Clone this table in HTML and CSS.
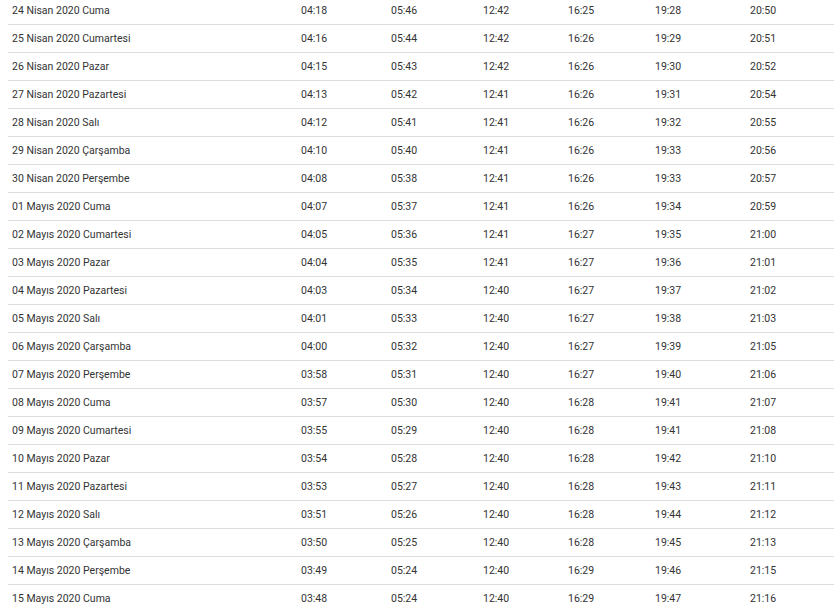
FILE: index.html
```html
<!DOCTYPE html>
<html lang="tr">
<head>
<meta charset="utf-8">
<title>İmsakiye</title>
<link rel="stylesheet" href="styles.css">
</head>
<body>
<table class="times">
<colgroup>
<col class="c-date"><col class="c1"><col class="c2"><col class="c3"><col class="c4"><col class="c5"><col class="c6">
</colgroup>
<tbody>
<tr><td>24 Nisan 2020 Cuma</td><td>04:18</td><td>05:46</td><td>12:42</td><td>16:25</td><td>19:28</td><td>20:50</td></tr>
<tr><td>25 Nisan 2020 Cumartesi</td><td>04:16</td><td>05:44</td><td>12:42</td><td>16:26</td><td>19:29</td><td>20:51</td></tr>
<tr><td>26 Nisan 2020 Pazar</td><td>04:15</td><td>05:43</td><td>12:42</td><td>16:26</td><td>19:30</td><td>20:52</td></tr>
<tr><td>27 Nisan 2020 Pazartesi</td><td>04:13</td><td>05:42</td><td>12:41</td><td>16:26</td><td>19:31</td><td>20:54</td></tr>
<tr><td>28 Nisan 2020 Salı</td><td>04:12</td><td>05:41</td><td>12:41</td><td>16:26</td><td>19:32</td><td>20:55</td></tr>
<tr><td>29 Nisan 2020 Çarşamba</td><td>04:10</td><td>05:40</td><td>12:41</td><td>16:26</td><td>19:33</td><td>20:56</td></tr>
<tr><td>30 Nisan 2020 Perşembe</td><td>04:08</td><td>05:38</td><td>12:41</td><td>16:26</td><td>19:33</td><td>20:57</td></tr>
<tr><td>01 Mayıs 2020 Cuma</td><td>04:07</td><td>05:37</td><td>12:41</td><td>16:26</td><td>19:34</td><td>20:59</td></tr>
<tr><td>02 Mayıs 2020 Cumartesi</td><td>04:05</td><td>05:36</td><td>12:41</td><td>16:27</td><td>19:35</td><td>21:00</td></tr>
<tr><td>03 Mayıs 2020 Pazar</td><td>04:04</td><td>05:35</td><td>12:41</td><td>16:27</td><td>19:36</td><td>21:01</td></tr>
<tr><td>04 Mayıs 2020 Pazartesi</td><td>04:03</td><td>05:34</td><td>12:40</td><td>16:27</td><td>19:37</td><td>21:02</td></tr>
<tr><td>05 Mayıs 2020 Salı</td><td>04:01</td><td>05:33</td><td>12:40</td><td>16:27</td><td>19:38</td><td>21:03</td></tr>
<tr><td>06 Mayıs 2020 Çarşamba</td><td>04:00</td><td>05:32</td><td>12:40</td><td>16:27</td><td>19:39</td><td>21:05</td></tr>
<tr><td>07 Mayıs 2020 Perşembe</td><td>03:58</td><td>05:31</td><td>12:40</td><td>16:27</td><td>19:40</td><td>21:06</td></tr>
<tr><td>08 Mayıs 2020 Cuma</td><td>03:57</td><td>05:30</td><td>12:40</td><td>16:28</td><td>19:41</td><td>21:07</td></tr>
<tr><td>09 Mayıs 2020 Cumartesi</td><td>03:55</td><td>05:29</td><td>12:40</td><td>16:28</td><td>19:41</td><td>21:08</td></tr>
<tr><td>10 Mayıs 2020 Pazar</td><td>03:54</td><td>05:28</td><td>12:40</td><td>16:28</td><td>19:42</td><td>21:10</td></tr>
<tr><td>11 Mayıs 2020 Pazartesi</td><td>03:53</td><td>05:27</td><td>12:40</td><td>16:28</td><td>19:43</td><td>21:11</td></tr>
<tr><td>12 Mayıs 2020 Salı</td><td>03:51</td><td>05:26</td><td>12:40</td><td>16:28</td><td>19:44</td><td>21:12</td></tr>
<tr><td>13 Mayıs 2020 Çarşamba</td><td>03:50</td><td>05:25</td><td>12:40</td><td>16:28</td><td>19:45</td><td>21:13</td></tr>
<tr><td>14 Mayıs 2020 Perşembe</td><td>03:49</td><td>05:24</td><td>12:40</td><td>16:29</td><td>19:46</td><td>21:15</td></tr>
<tr><td>15 Mayıs 2020 Cuma</td><td>03:48</td><td>05:24</td><td>12:40</td><td>16:29</td><td>19:47</td><td>21:16</td></tr>
</tbody>
</table>
</body>
</html>
```
FILE: styles.css
```css
html, body {
  margin: 0;
  padding: 0;
  background: #ffffff;
}
body {
  font-family: Roboto, "Liberation Sans", Arial, sans-serif;
  font-size: 10.5px;
  color: #333333;
  overflow: hidden;
}
.times {
  border-collapse: collapse;
  table-layout: fixed;
  width: 826px;
  margin: -3px 0 0 8px;
}
.c-date { width: 289px; }
.c1 { width: 90px; }
.c2 { width: 92px; }
.c3 { width: 85px; }
.c4 { width: 87px; }
.c5 { width: 95px; }
.c6 { width: 88px; }
.times td {
  height: 27px;
  padding: 0 0 0 4px;
  vertical-align: middle;
  border-bottom: 1px solid #dddddd;
  white-space: nowrap;
  line-height: 13px;
}
```
